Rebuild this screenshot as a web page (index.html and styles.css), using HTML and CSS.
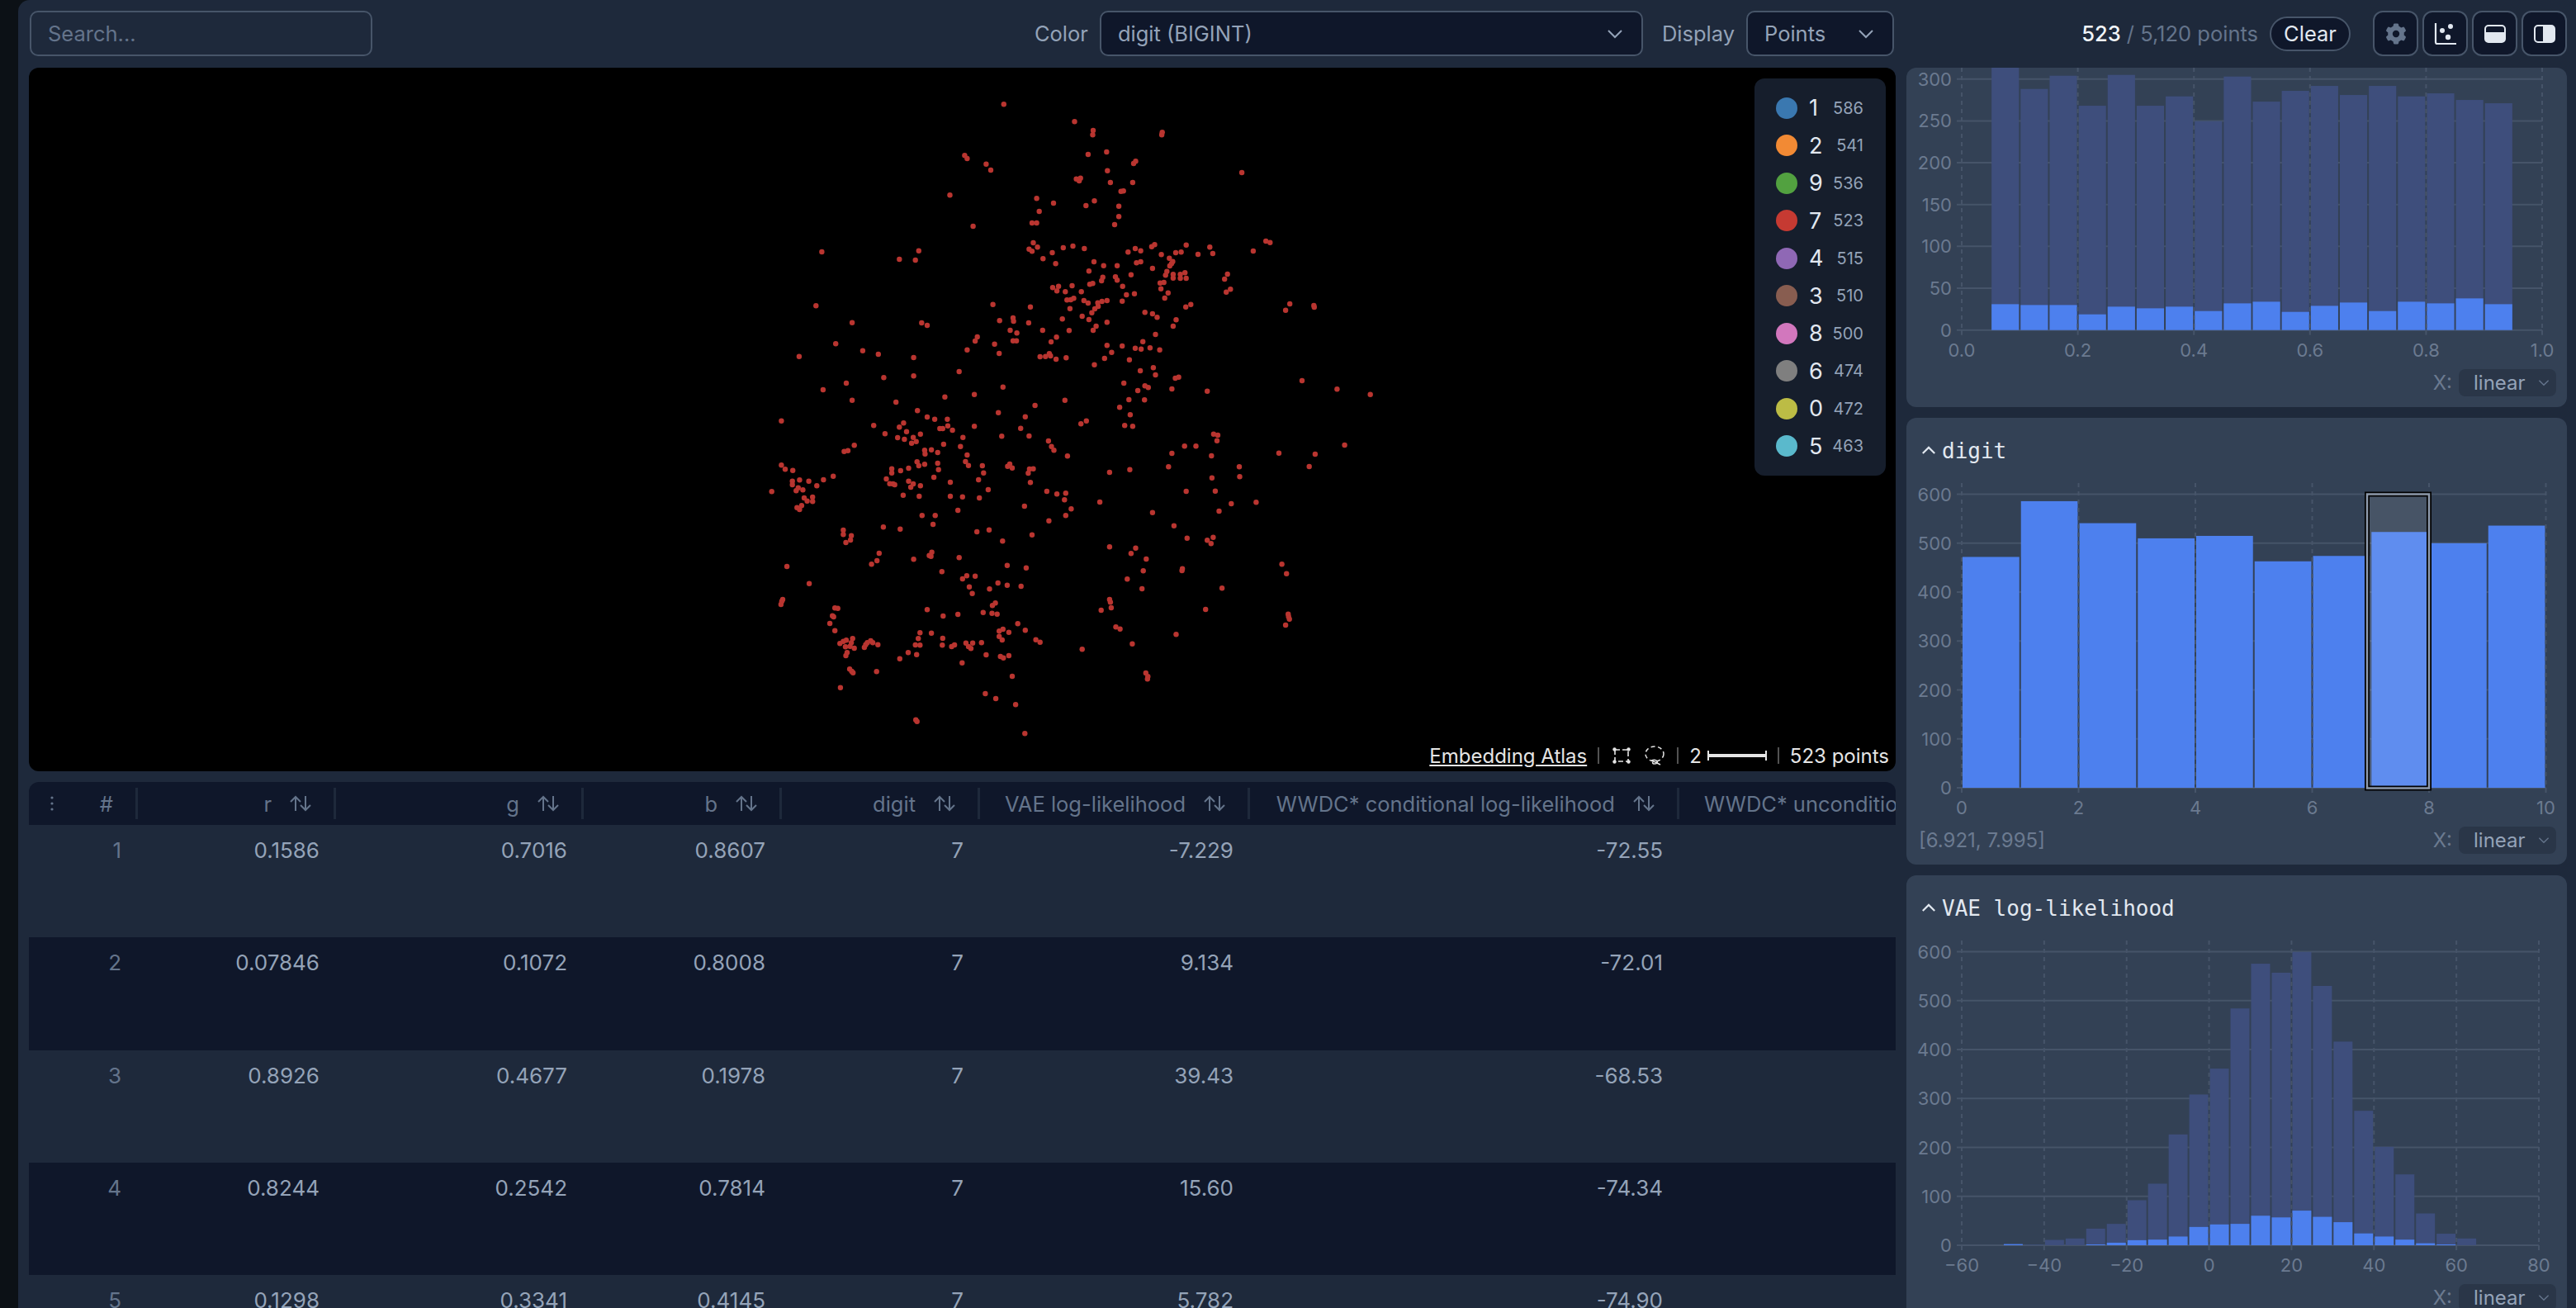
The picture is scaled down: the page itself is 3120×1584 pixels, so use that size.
FILE: index.html
```html
<!doctype html>
<html lang="en">
  <head>
    <meta charset="UTF-8" />
    <title>Embedding Atlas</title>
    <link rel="stylesheet" href="styles.css">
  </head>

  <body>
    <div class="app">
      <div class="topbar">
        <div class="topbar-left">
          <input class="search" type="text" placeholder="Search..." />
          <div class="filters">
            <span class="field-label">Color</span>
            <div class="picker picker-color">
              <span>digit (BIGINT)</span>
              <svg class="chevron" viewBox="0 0 20 12"><path d="M2 2l8 8 8-8" /></svg>
            </div>
            <span class="field-label field-label-gap">Display</span>
            <div class="picker picker-display">
              <span>Points</span>
              <svg class="chevron" viewBox="0 0 20 12"><path d="M2 2l8 8 8-8" /></svg>
            </div>
          </div>
        </div>
        <div class="topbar-right">
          <div class="counts"><strong>523</strong> / 5,120 points</div>
          <button class="clear">Clear</button>
          <div class="tools">
            <button class="tool">
              <svg width="28" height="28" viewBox="0 0 20 20"><path fill="#64748b" fill-rule="evenodd" d="M7.84 1.804A1 1 0 0 1 8.82 1h2.36a1 1 0 0 1 .98.804l.331 1.652a6.993 6.993 0 0 1 1.929 1.115l1.598-.54a1 1 0 0 1 1.186.447l1.18 2.044a1 1 0 0 1-.205 1.251l-1.267 1.113a7.047 7.047 0 0 1 0 2.228l1.267 1.113a1 1 0 0 1 .206 1.25l-1.18 2.045a1 1 0 0 1-1.187.447l-1.598-.54a6.993 6.993 0 0 1-1.929 1.115l-.33 1.652a1 1 0 0 1-.98.804H8.82a1 1 0 0 1-.98-.804l-.331-1.652a6.993 6.993 0 0 1-1.929-1.115l-1.598.54a1 1 0 0 1-1.186-.447l-1.18-2.044a1 1 0 0 1 .205-1.251l1.267-1.114a7.05 7.05 0 0 1 0-2.227L1.821 7.773a1 1 0 0 1-.206-1.25l1.18-2.045a1 1 0 0 1 1.187-.447l1.598.54A6.992 6.992 0 0 1 7.51 3.456l.33-1.652ZM10 13a3 3 0 1 0 0-6 3 3 0 0 0 0 6Z" /></svg>
            </button>
            <button class="tool">
              <svg width="28" height="28" viewBox="0 0 28 28"><path d="M2 1v23q0 2 2 2h23" fill="none" stroke="#e2e8f0" stroke-width="2.2" /><circle cx="10" cy="10" r="3" fill="#e2e8f0" /><circle cx="20" cy="5" r="3" fill="#e2e8f0" /><circle cx="17" cy="18" r="3.2" fill="#e2e8f0" /></svg>
            </button>
            <button class="tool">
              <svg width="26" height="22" viewBox="0 0 26 22"><rect x="1" y="1" width="24" height="20" rx="4" fill="none" stroke="#e2e8f0" stroke-width="2" /><path d="M1 9h24v8q0 4-4 4H5q-4 0-4-4z" fill="#e2e8f0" /></svg>
            </button>
            <button class="tool">
              <svg width="26" height="22" viewBox="0 0 26 22"><rect x="1" y="1" width="24" height="20" rx="4" fill="none" stroke="#e2e8f0" stroke-width="2" /><path d="M11 1h10q4 0 4 4v12q0 4-4 4H11z" fill="#e2e8f0" /></svg>
            </button>
          </div>
        </div>
      </div>

      <div class="main">
        <div class="content">
          <div class="plot">
            <svg class="points" id="points" width="2261" height="852"></svg>

            <div class="legend">
              <div class="legend-row"><span class="legend-dot dot-1"></span><span class="legend-name">1</span><span class="legend-count">586</span></div>
              <div class="legend-row"><span class="legend-dot dot-2"></span><span class="legend-name">2</span><span class="legend-count">541</span></div>
              <div class="legend-row"><span class="legend-dot dot-9"></span><span class="legend-name">9</span><span class="legend-count">536</span></div>
              <div class="legend-row"><span class="legend-dot dot-7"></span><span class="legend-name">7</span><span class="legend-count">523</span></div>
              <div class="legend-row"><span class="legend-dot dot-4"></span><span class="legend-name">4</span><span class="legend-count">515</span></div>
              <div class="legend-row"><span class="legend-dot dot-3"></span><span class="legend-name">3</span><span class="legend-count">510</span></div>
              <div class="legend-row"><span class="legend-dot dot-8"></span><span class="legend-name">8</span><span class="legend-count">500</span></div>
              <div class="legend-row"><span class="legend-dot dot-6"></span><span class="legend-name">6</span><span class="legend-count">474</span></div>
              <div class="legend-row"><span class="legend-dot dot-0"></span><span class="legend-name">0</span><span class="legend-count">472</span></div>
              <div class="legend-row"><span class="legend-dot dot-5"></span><span class="legend-name">5</span><span class="legend-count">463</span></div>
            </div>

            <div class="status">
              <a class="status-link">Embedding Atlas</a>
              <span class="status-sep"></span>
              <svg class="status-rect" width="22" height="20" viewBox="0 0 22 20"><rect x="3" y="3" width="16" height="14" fill="none" stroke="#e5e5e5" stroke-width="1.6" stroke-dasharray="6 3" /><circle cx="2.5" cy="2.5" r="2.2" fill="#e5e5e5" /><circle cx="19.5" cy="2.5" r="2.2" fill="#e5e5e5" /><circle cx="2.5" cy="17.5" r="2.2" fill="#e5e5e5" /><circle cx="19.5" cy="17.5" r="2.2" fill="#e5e5e5" /></svg>
              <svg class="status-lasso" width="24" height="24" viewBox="0 0 24 24"><ellipse cx="12" cy="10" rx="11" ry="9" fill="none" stroke="#e5e5e5" stroke-width="1.5" stroke-dasharray="5 3.5" /><path d="M8 18q5-2 7 1t-4 3q-3-1 0-3l8 4" fill="none" stroke="#e5e5e5" stroke-width="1.5" /></svg>
              <span class="status-sep"></span>
              <span>2</span>
              <span class="scale-bar"></span>
              <span class="status-sep"></span>
              <span>523 points</span>
            </div>
          </div>

          <div class="table">
            <div class="table-head">
              <div class="th th-index">
                <svg width="4" height="18" viewBox="0 0 4 18"><circle cx="2" cy="2" r="1.6" /><circle cx="2" cy="9" r="1.6" /><circle cx="2" cy="16" r="1.6" /></svg>
                <span>#</span>
              </div>
              <div class="th"><span>r</span><svg class="sort" viewBox="0 0 26 20"><path d="M7 19V2M1 8l6-6 6 6M19 1v17M13 12l6 6 6-6" /></svg></div>
              <div class="th"><span>g</span><svg class="sort" viewBox="0 0 26 20"><path d="M7 19V2M1 8l6-6 6 6M19 1v17M13 12l6 6 6-6" /></svg></div>
              <div class="th"><span>b</span><svg class="sort" viewBox="0 0 26 20"><path d="M7 19V2M1 8l6-6 6 6M19 1v17M13 12l6 6 6-6" /></svg></div>
              <div class="th"><span>digit</span><svg class="sort" viewBox="0 0 26 20"><path d="M7 19V2M1 8l6-6 6 6M19 1v17M13 12l6 6 6-6" /></svg></div>
              <div class="th"><span>VAE log-likelihood</span><svg class="sort" viewBox="0 0 26 20"><path d="M7 19V2M1 8l6-6 6 6M19 1v17M13 12l6 6 6-6" /></svg></div>
              <div class="th"><span>WWDC* conditional log-likelihood</span><svg class="sort" viewBox="0 0 26 20"><path d="M7 19V2M1 8l6-6 6 6M19 1v17M13 12l6 6 6-6" /></svg></div>
              <div class="th th-last"><span>WWDC* unconditional log-likelihood</span></div>
            </div>

            <div class="table-row">
              <div class="td td-index">1</div><div class="td">0.1586</div><div class="td">0.7016</div><div class="td">0.8607</div><div class="td">7</div><div class="td">-7.229</div><div class="td">-72.55</div>
            </div>
            <div class="table-row">
              <div class="td td-index">2</div><div class="td">0.07846</div><div class="td">0.1072</div><div class="td">0.8008</div><div class="td">7</div><div class="td">9.134</div><div class="td">-72.01</div>
            </div>
            <div class="table-row">
              <div class="td td-index">3</div><div class="td">0.8926</div><div class="td">0.4677</div><div class="td">0.1978</div><div class="td">7</div><div class="td">39.43</div><div class="td">-68.53</div>
            </div>
            <div class="table-row">
              <div class="td td-index">4</div><div class="td">0.8244</div><div class="td">0.2542</div><div class="td">0.7814</div><div class="td">7</div><div class="td">15.60</div><div class="td">-74.34</div>
            </div>
            <div class="table-row">
              <div class="td td-index">5</div><div class="td">0.1298</div><div class="td">0.3341</div><div class="td">0.4145</div><div class="td">7</div><div class="td">5.782</div><div class="td">-74.90</div>
            </div>
          </div>
        </div>

        <div class="sidebar">
          <div class="card">
            <svg class="chart" id="chart-b" width="800" height="359"></svg>
            <div class="card-foot">
              <span class="foot-range"></span>
              <span class="foot-x">X:</span>
              <div class="scale-picker"><span>linear</span><svg class="chevron-small" viewBox="0 0 20 12"><path d="M2 2l8 8 8-8" /></svg></div>
            </div>
          </div>

          <div class="card">
            <div class="card-title">
              <svg class="caret" viewBox="0 0 20 12"><path d="M2 10l8-8 8 8" /></svg>
              <span>digit</span>
            </div>
            <svg class="chart" id="chart-digit" width="800" height="410"></svg>
            <div class="card-foot">
              <span class="foot-range">[6.921, 7.995]</span>
              <span class="foot-x">X:</span>
              <div class="scale-picker"><span>linear</span><svg class="chevron-small" viewBox="0 0 20 12"><path d="M2 2l8 8 8-8" /></svg></div>
            </div>
          </div>

          <div class="card">
            <div class="card-title">
              <svg class="caret" viewBox="0 0 20 12"><path d="M2 10l8-8 8 8" /></svg>
              <span>VAE log-likelihood</span>
            </div>
            <svg class="chart" id="chart-vae" width="800" height="410"></svg>
            <div class="card-foot">
              <span class="foot-range"></span>
              <span class="foot-x">X:</span>
              <div class="scale-picker"><span>linear</span><svg class="chevron-small" viewBox="0 0 20 12"><path d="M2 2l8 8 8-8" /></svg></div>
            </div>
          </div>
        </div>
      </div>
    </div>

    <script src="script.js"></script>
  </body>
</html>
```

FILE: styles.css
```css
* {
  box-sizing: border-box;
}

html,
body {
  margin: 0;
  height: 1584px;
  overflow: hidden;
}

body {
  padding-left: 22px;
  background-color: #0c1116;
  font-family: Inter, "Liberation Sans", sans-serif;
  font-size: 25.5px;
  color: #94a3b8;
}

.app {
  display: flex;
  flex-direction: column;
  height: 1584px;
  padding-right: 11px;
  background-color: #1e293b;
  border-top-left-radius: 14px;
  overflow: hidden;
}

/* top bar */
.topbar {
  display: flex;
  flex-shrink: 0;
  gap: 13px;
  height: 82px;
  padding: 13px 0 14px 13px;
}

.topbar-left {
  display: flex;
  justify-content: space-between;
  width: 2261px;
  padding-right: 2px;
}

.topbar-right {
  display: flex;
  justify-content: flex-end;
  align-items: center;
  width: 800px;
}

.search {
  width: 415px;
  height: 55px;
  margin-left: 1px;
  padding: 0 20px;
  background-color: #1e293b;
  border: 2px solid #475569;
  border-radius: 10px;
  outline: none;
  font: inherit;
  color: #94a3b8;
}

.search::placeholder {
  color: #64748b;
}

.filters {
  display: flex;
  align-items: center;
}

.field-label {
  margin-right: 14px;
}

.field-label-gap {
  margin-left: 23px;
}

.picker {
  display: flex;
  justify-content: space-between;
  align-items: center;
  height: 55px;
  padding: 0 22px 0 20px;
  background-color: #0f172a;
  border: 2px solid #475569;
  border-radius: 10px;
}

.picker-color {
  width: 658px;
}

.picker-display {
  width: 179px;
}

.chevron {
  width: 20px;
  height: 12px;
  fill: none;
  stroke: #94a3b8;
  stroke-width: 2;
}

.counts {
  color: #64748b;
}

.counts strong {
  font-weight: 500;
  color: #f1f5f9;
}

.clear {
  width: 98px;
  height: 42px;
  margin-left: 14px;
  padding: 0;
  background-color: #0f172a;
  border: 2px solid #475569;
  border-radius: 21px;
  font: inherit;
  color: #e2e8f0;
}

.tools {
  display: flex;
  gap: 5px;
  margin-left: 27px;
}

.tool {
  display: flex;
  justify-content: center;
  align-items: center;
  width: 55px;
  height: 55px;
  padding: 0;
  background-color: #0f172a;
  border: 2px solid #475569;
  border-radius: 12px;
}

/* main area */
.main {
  display: flex;
  flex: 1;
  gap: 13px;
  min-height: 0;
  padding-left: 13px;
}

.content {
  display: flex;
  flex-direction: column;
  gap: 13px;
  width: 2261px;
}

.plot {
  position: relative;
  flex-shrink: 0;
  height: 852px;
  background-color: black;
  border-radius: 12px;
  overflow: hidden;
}

.points {
  display: block;
}

.points circle {
  fill: #b93530;
}

.legend {
  position: absolute;
  top: 13px;
  right: 12px;
  width: 159px;
  padding: 13px 27px 13px 26px;
  background-color: #161e2c;
  border-radius: 12px;
}

.legend-row {
  display: flex;
  align-items: center;
  height: 45.5px;
}

.legend-dot {
  width: 26px;
  height: 26px;
  border-radius: 50%;
}

.dot-1 { background-color: #3a78b0; }
.dot-2 { background-color: #f28a34; }
.dot-9 { background-color: #52a140; }
.dot-7 { background-color: #c63a32; }
.dot-4 { background-color: #8f68b5; }
.dot-3 { background-color: #885d50; }
.dot-8 { background-color: #d277bd; }
.dot-6 { background-color: #7f7f7f; }
.dot-0 { background-color: #bcbc45; }
.dot-5 { background-color: #5ab9cc; }

.legend-name {
  margin-left: 14px;
  font-size: 27px;
  color: #e2e8f0;
}

.legend-count {
  margin-left: auto;
  font-size: 20px;
}

.status {
  position: absolute;
  right: 8px;
  bottom: 0;
  display: flex;
  align-items: center;
  gap: 13px;
  height: 38px;
  font-size: 24px;
  color: #e5e5e5;
}

.status-link {
  text-decoration: underline;
}

.status-sep {
  width: 2px;
  height: 20px;
  background-color: #525252;
}

.status-rect {
  margin-left: 3px;
}

.status-lasso {
  margin: 0 2px 0 4px;
}

.scale-bar {
  width: 72px;
  height: 12px;
  margin-left: -6px;
  border: solid #e5e5e5;
  border-width: 0 2px;
  background: linear-gradient(#e5e5e5, #e5e5e5) center / 100% 4px no-repeat;
}

/* table */
.table {
  flex: 1;
  min-height: 0;
  border-radius: 12px 12px 0 0;
  overflow: hidden;
}

.table-head,
.table-row {
  display: grid;
  grid-template-columns: 132px 240px 300px 240px 240px 327px 520px 262px;
}

.table-head {
  align-items: center;
  height: 52px;
  background-color: #0f172a;
  color: #64748b;
}

.th {
  display: flex;
  justify-content: flex-end;
  align-items: center;
  gap: 22px;
  height: 38px;
  padding-right: 27px;
  border-right: 3px solid #1e293b;
  white-space: nowrap;
}

.th-index {
  justify-content: space-between;
  padding-left: 26px;
}

.th-index svg {
  fill: #64748b;
}

.th-last {
  justify-content: flex-start;
  padding: 0 0 0 30px;
  border-right: 0;
}

.th-last span {
  overflow: hidden;
}

.sort {
  width: 26px;
  height: 20px;
  fill: none;
  stroke: #64748b;
  stroke-width: 2;
}

.table-row {
  height: 136.25px;
  background-color: #1e293b;
}

.table-row:nth-of-type(odd) {
  background-color: #0f172a;
}

.td {
  padding: 15px 20px 0 0;
  font-size: 26px;
  line-height: 32px;
  text-align: right;
}

.td-index {
  color: #64748b;
}

/* histograms */
.sidebar {
  display: flex;
  flex-direction: column;
  gap: 13px;
  width: 800px;
}

.card {
  flex-shrink: 0;
  padding-bottom: 13px;
  background-color: #334155;
  border-radius: 12px;
}

.card-title {
  display: flex;
  align-items: center;
  gap: 7px;
  height: 79px;
  padding: 0 0 0 18px;
  font-family: "DejaVu Sans Mono", monospace;
  font-size: 26px;
  color: #e2e8f0;
}

.caret {
  width: 18px;
  height: 11px;
  fill: none;
  stroke: #e2e8f0;
  stroke-width: 2.4;
}

.chart {
  display: block;
}

.chart text {
  font-size: 22px;
  fill: #6b7a90;
}

.card-foot {
  display: flex;
  align-items: center;
  height: 33px;
  margin-top: 6px;
  padding: 0 13px 0 15px;
  font-size: 24px;
}

.foot-range {
  margin-right: auto;
  color: #6b7a90;
}

.foot-x {
  margin-right: 8px;
  color: #6b7a90;
}

.scale-picker {
  display: flex;
  justify-content: space-between;
  align-items: center;
  width: 118px;
  height: 33px;
  padding: 0 8px 0 18px;
  background-color: #2a3648;
  border-radius: 8px;
}

.chevron-small {
  width: 14px;
  height: 9px;
  fill: none;
  stroke: #64748b;
  stroke-width: 2;
}
```

FILE: script.js
```js
// scatter points, [x, y] in plot pixels * (1.96, 3)
const pointsTop = [[619,79],[787,142],[831,174],[830,190],[995,181],[994,190],[526,265],[532,276],[577,296],[588,318],[819,261],[863,252],[932,286],[927,294],[865,320],[1184,327],[801,347],[791,350],[798,357],[872,363],[925,363],[491,409],[897,395],[903,394],[697,421],[737,438],[834,430],[814,447],[892,449],[703,468],[892,487],[686,510],[697,510],[882,516],[546,522],[689,582],[699,598],[679,605],[686,613],[760,600],[783,594],[810,603],[734,618],[712,640],[742,658],[187,615],[417,611],[371,642],[409,645],[1241,576],[1251,581],[1211,612],[1052,590],[1108,598],[1115,621],[1080,624],[1040,616],[1027,618],[993,625],[977,589],[970,596],[931,603],[944,611],[914,616],[1012,638],[1020,650],[1017,658],[1013,666],[944,651],[934,655],[833,651],[856,665],[888,665],[972,675],[821,685],[921,698],[1006,686],[1003,700],[1021,697],[1021,710],[1038,697],[1038,711],[1049,691],[1052,711],[1150,696],[1143,714],[1157,751],[1147,761],[854,707],[851,720],[884,706],[888,718],[990,728],[999,726],[992,749],[1009,764],[1001,783],[830,730],[823,733],[901,740],[735,745],[749,740],[745,757],[781,738],[765,760],[803,760],[910,771],[929,767],[769,790],[778,789],[785,784],[809,792],[819,801],[842,800],[852,795],[864,792],[900,794],[843,813],[835,822],[828,836],[776,821],[593,806],[682,815],[173,811],[1298,804],[1288,827],[1355,810],[1356,816],[1063,806],[1051,815],[954,835],[972,840],[983,853],[1028,862],[1021,885],[805,849],[821,861],[758,859],[641,855],[642,867],[609,865],[678,873],[864,871],[838,885],[831,900],[259,872],[424,873],[437,882],[634,900],[650,910],[711,900],[774,901],[979,915],[556,924],[551,939],[744,925],[731,942],[641,938],[649,938],[597,950],[949,941],[220,949],[864,955],[900,957],[931,965],[945,968],[966,964],[989,971],[284,974],[532,971],[608,984],[875,980],[321,987],[133,995],[405,999],[705,996],[718,995],[727,985],[730,993],[743,1005],[767,1000],[858,1002],[917,1007],[834,1025],[974,1036],[943,1047],[513,1050],[979,1062],[334,1072],[405,1066],[1026,1074],[1034,1070],[245,1092],[904,1092],[1327,1083],[190,1116],[617,1106],[954,1102],[962,1108],[937,1119],[1018,1113],[1102,1121],[1410,1114],[1489,1133],[549,1133],[479,1142],[259,1154],[363,1161],[764,1154],[693,1173],[916,1152],[953,1153],[894,1180],[414,1192],[606,1199]]

const pointsBottom = [[91,29],[310,46],[371,52],[381,37],[388,68],[437,15],[455,23],[485,23],[486,47],[467,57],[474,57],[497,63],[549,49],[670,14],[659,56],[679,84],[614,85],[522,89],[802,40],[815,29],[906,46],[925,49],[919,7],[337,76],[421,77],[367,90],[383,96],[404,89],[411,104],[400,110],[476,114],[516,122],[264,118],[249,137],[240,140],[431,136],[447,134],[432,149],[462,144],[532,153],[725,102],[732,122],[738,136],[770,157],[1117,77],[1127,81],[1125,101],[1048,121],[1075,121],[1018,147],[1112,156],[1272,146],[1358,150],[1428,117],[1344,195],[91,190],[100,205],[118,209],[413,178],[417,192],[431,187],[462,183],[528,177],[535,191],[568,192],[633,186],[628,194],[639,200],[680,204],[689,203],[677,219],[870,216],[918,206],[1010,196],[1178,196],[1179,232],[1113,236],[353,203],[353,218],[374,210],[393,201],[464,206],[571,218],[214,230],[191,243],[156,248],[134,244],[117,248],[117,261],[175,265],[131,272],[126,283],[142,280],[68,286],[340,240],[393,248],[348,257],[356,258],[360,261],[404,258],[398,270],[421,265],[453,234],[492,252],[559,243],[682,253],[582,279],[1052,285],[1121,284],[721,285],[745,295],[766,292],[763,316],[847,324],[380,299],[418,303],[492,303],[521,305],[561,309],[145,309],[165,306],[152,320],[165,322],[139,337],[128,344],[134,351],[668,339],[779,349],[1159,330],[1218,325],[1130,357],[510,354],[972,362],[425,373],[456,373],[766,373],[726,392],[451,405],[1023,410],[333,415],[373,422],[238,426],[238,442],[257,446],[255,462],[244,471],[584,425],[555,432],[686,443],[616,466],[1054,455],[1116,452],[1102,463],[1111,475],[870,487],[932,491],[921,511],[957,531],[323,510],[448,506],[442,518],[446,521],[513,526],[318,537],[305,550],[405,532],[104,558],[627,554],[672,563],[1279,550],[1290,584],[1043,566],[1042,573],[950,574],[472,577],[531,592],[551,593],[521,603],[912,604],[157,620],[605,618],[627,626],[660,630],[537,632],[585,640],[947,639],[1137,637],[544,656],[94,678],[92,685],[90,696],[870,678],[872,688],[599,691],[592,700],[874,708],[850,717],[1098,714],[218,709],[225,710],[437,715],[570,725],[591,728],[603,731],[510,732],[475,738],[212,737],[215,741],[1294,731],[1295,740],[1297,749],[206,765],[652,766],[1288,771],[218,791],[885,778],[895,785],[617,786],[608,793],[670,790],[631,797],[420,799],[447,800],[1028,805],[608,812],[615,825],[474,819],[695,824],[705,833],[260,820],[245,826],[238,830],[230,838],[257,835],[243,850],[254,848],[264,855],[303,828],[308,835],[295,835],[291,842],[288,852],[320,842],[416,820],[409,843],[420,844],[473,844],[495,849],[502,843],[529,836],[545,836],[566,835],[535,849],[541,856],[924,839],[805,859],[392,871],[412,878],[372,893],[247,871],[244,882],[577,879],[611,885],[618,890],[631,882],[520,908],[253,931],[258,939],[261,944],[317,940],[639,957],[956,945],[961,958],[960,967],[231,998],[575,1020],[600,1038],[647,1060],[410,1115],[413,1121],[669,1165]]

function drawPoints() {
  let html = ''
  pointsTop.forEach(([x, y]) => {
    html += `<circle cx="${(x / 1.96 + 865).toFixed(1)}" cy="${(y / 3 + 18).toFixed(1)}" r="3.2" />`
  })
  pointsBottom.forEach(([x, y]) => {
    html += `<circle cx="${(x / 1.96 + 865).toFixed(1)}" cy="${(y / 3 + 418).toFixed(1)}" r="3.2" />`
  })
  document.getElementById('points').innerHTML = html
}

// bars: [start, end, background height px, foreground height px]
function drawChart(id, c) {
  const sx = (v) => c.x0 + ((v - c.xMin) / (c.xMax - c.xMin)) * (c.x1 - c.x0)
  const sy = (v) => c.y0 - v * c.yUnit
  const grid = '#465469'
  let html = ''

  c.yTicks.forEach((t) => {
    html += `<line x1="61" x2="${c.x1}" y1="${sy(t)}" y2="${sy(t)}" stroke="${grid}" stroke-width="2" />`
    html += `<text x="55" y="${sy(t) + 8}" text-anchor="end">${t}</text>`
  })

  c.bars.forEach(([a, b, bg, fg]) => {
    const x = sx(a) + 1
    const w = sx(b) - sx(a) - 2
    if (bg) html += `<rect x="${x}" y="${c.y0 - bg}" width="${w}" height="${bg}" fill="#3e4e7c" />`
    if (fg) html += `<rect x="${x}" y="${c.y0 - fg}" width="${w}" height="${fg}" fill="#4d80ee" />`
  })

  c.xTicks.forEach((t) => {
    const x = sx(t)
    html += `<line x1="${x}" x2="${x}" y1="0" y2="${c.y0}" stroke="${grid}" stroke-width="2" stroke-dasharray="5 5" />`
    html += `<line x1="${x}" x2="${x}" y1="${c.y0}" y2="${c.y0 + 6}" stroke="${grid}" stroke-width="2" />`
    html += `<text x="${x}" y="${c.y0 + 32}" text-anchor="middle">${c.xFormat(t)}</text>`
  })

  if (c.brush) {
    const [a, b] = c.brush
    html += `<rect x="${a}" y="13.5" width="${b - a}" height="356" fill="#fff" fill-opacity="0.1" stroke="#000" stroke-width="6" />`
    html += `<rect x="${a}" y="13.5" width="${b - a}" height="356" fill="none" stroke="#8d99ab" stroke-width="2.5" />`
  }

  document.getElementById(id).innerHTML = html
}

const tops = {
  bg: [245, 323, 275, 384, 272, 384, 350, 440, 278, 369, 330, 312, 345, 312, 350, 339, 363, 375],
  fg: [1105, 1108, 1108, 1142, 1114, 1120, 1114, 1130, 1102, 1096, 1133, 1111, 1099, 1130, 1096, 1102, 1084, 1105]
}

drawPoints()

drawChart('chart-b', {
  x0: 67, x1: 770, xMin: 0, xMax: 1,
  y0: 317.7, yUnit: 1.0133,
  yTicks: [0, 50, 100, 150, 200, 250, 300],
  xTicks: [0, 0.2, 0.4, 0.6, 0.8, 1],
  xFormat: (t) => t.toFixed(1),
  bars: tops.bg.map((top, i) => [0.05 + i * 0.05, 0.1 + i * 0.05, (1199 - top) / 3, (1199 - tops.fg[i]) / 3])
})

drawChart('chart-digit', {
  x0: 67, x1: 774.5, xMin: 0, xMax: 10,
  y0: 369, yUnit: 0.5923,
  yTicks: [0, 100, 200, 300, 400, 500, 600],
  xTicks: [0, 2, 4, 6, 8, 10],
  xFormat: (t) => t,
  brush: [558, 633],
  bars: [472, 586, 541, 510, 515, 463, 474, 523, 500, 536].map((n, i) => [i, i + 1, 0, n * 0.5923])
})

const vaeBg = [1338, 1340, 1323, 1318, 1283, 1266, 1182, 1123, 948, 806, 714, 500, 341, 373, 299, 420, 618, 864, 992, 1090, 1229, 1301, 1318]
const vaeFg = [1338, 1342, 1342, 1342, 1339, 1333, 1324, 1322, 1311, 1277, 1268, 1266, 1237, 1243, 1219, 1241, 1260, 1300, 1311, 1322, 1335, 1339, 1342]

drawChart('chart-vae', {
  x0: 67, x1: 766, xMin: -60, xMax: 80,
  y0: 369, yUnit: 0.5923,
  yTicks: [0, 100, 200, 300, 400, 500, 600],
  xTicks: [-60, -40, -20, 0, 20, 40, 60, 80],
  xFormat: (t) => String(t).replace('-', '\u2212'),
  bars: vaeBg.map((top, i) => [-50 + i * 5, -45 + i * 5, (1342 - top) / 2.936, (1342 - vaeFg[i]) / 2.936])
})
```
